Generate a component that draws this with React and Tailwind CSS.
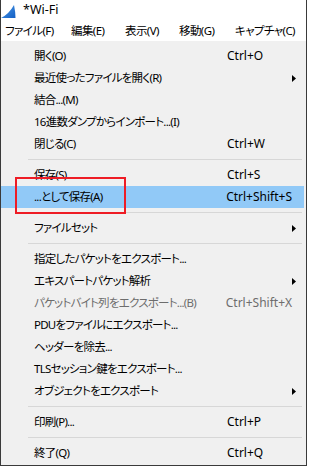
import React from "react";

const font = {
  fontFamily: '"Noto Sans", "Noto Sans CJK JP", sans-serif',
  fontFeatureSettings: '"palt"',
};

function Arrow() {
  return (
    <svg width="4" height="7" viewBox="0 0 4 7" className="block">
      <path d="M0 0 L4 3.5 L0 7 Z" fill="#000" />
    </svg>
  );
}

function Row({ label, shortcut, arrow, disabled, active }) {
  return (
    <div
      className={
        "flex items-center h-[22px] pl-[33px] mr-[2px] leading-none " +
        (active ? "bg-[#91c9f7] " : "") +
        (disabled ? "text-[#6d6d6d]" : "text-black")
      }
    >
      <div className="w-[193px] whitespace-nowrap text-[11.5px] tracking-[-0.75px]">{label}</div>
      <div className="flex-1 whitespace-nowrap text-[12px]">{shortcut}</div>
      <div className="w-[4px] mr-[8px]">{arrow ? <Arrow /> : null}</div>
    </div>
  );
}

function Sep() {
  return <div className="h-px bg-[#d7d7d7] ml-[27px] mr-[4px] my-[4px]" />;
}

export default function App() {
  return (
    <div
      className="relative w-[307px] h-[466px] overflow-hidden flex flex-col border-x border-b border-[#3a3a3a] bg-[#f0f0f0]"
      style={font}
    >
      <div className="h-[21px] bg-white flex items-center shrink-0">
        <svg width="16" height="16" viewBox="0 0 16 16" className="ml-[-1px] block">
          <defs>
            <linearGradient id="fin" x1="0" y1="0" x2="1" y2="1">
              <stop offset="0" stopColor="#4d9be8" />
              <stop offset="1" stopColor="#135fc4" />
            </linearGradient>
          </defs>
          <path d="M1 15 Q9 11 14 2 Q15.5 9 15.5 15 Z" fill="url(#fin)" />
        </svg>
        <span className="ml-[7px] text-[12.5px] text-black leading-none">*Wi-Fi</span>
      </div>
      <div className="h-[20px] bg-white flex items-center shrink-0 text-[11.5px] tracking-[-0.6px] text-black leading-none whitespace-nowrap">
        <span className="ml-[4px] w-[66px]">ファイル(F)</span>
        <span className="w-[54px]">編集(E)</span>
        <span className="w-[54px]">表示(V)</span>
        <span className="w-[56px]">移動(G)</span>
        <span>キャプチャ(C)</span>
      </div>
      <div className="flex-1 pt-[4px] flex flex-col">
        <Row label="開く(O)" shortcut="Ctrl+O" />
        <Row label="最近使ったファイルを開く(R)" arrow />
        <Row label="結合...(M)" />
        <Row label="16進数ダンプからインポート...(I)" />
        <Row label="閉じる(C)" shortcut="Ctrl+W" />
        <Sep />
        <Row label="保存(S)" shortcut="Ctrl+S" />
        <Row label="...として保存(A)" shortcut="Ctrl+Shift+S" active />
        <Sep />
        <Row label="ファイルセット" arrow />
        <Sep />
        <Row label="指定したパケットをエクスポート..." />
        <Row label="エキスパートパケット解析" arrow />
        <Row label="パケットバイト列をエクスポート...(B)" shortcut="Ctrl+Shift+X" disabled />
        <Row label="PDUをファイルにエクスポート..." />
        <Row label="ヘッダーを除去..." />
        <Row label="TLSセッション鍵をエクスポート..." />
        <Row label="オブジェクトをエクスポート" arrow />
        <Sep />
        <Row label="印刷(P)..." shortcut="Ctrl+P" />
        <Sep />
        <Row label="終了(Q)" shortcut="Ctrl+Q" />
      </div>
      <div className="absolute left-[14px] top-[177px] w-[111px] h-[37px] border-2 border-[#ee1c25]" />
    </div>
  );
}
